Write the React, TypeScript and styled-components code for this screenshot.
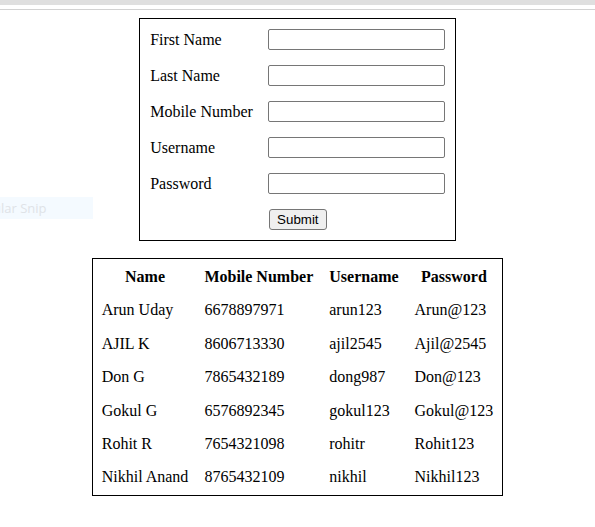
import React from "react";
import styled, { createGlobalStyle } from "styled-components";

const GlobalStyle = createGlobalStyle`
  html, body {
    margin: 0;
    padding: 0;
    background: #ffffff;
  }
  body {
    font-family: "Liberation Serif", "Times New Roman", serif;
    font-size: 16px;
    color: #000;
  }
`;

const Page = styled.div`
  position: relative;
  width: 595px;
  min-height: 527px;
  background: #fff;
`;

const TopBand = styled.div`
  height: 5px;
  background: #dfdfdf;
`;

const TopRule = styled.div`
  margin-top: 4px;
  height: 1px;
  background: #d2d2d2;
`;

const Content = styled.main`
  display: flex;
  flex-direction: column;
  align-items: center;
  padding-top: 8px;
  gap: 17px;
`;

const FormBox = styled.form`
  border: 1px solid #000;
  padding: 10px;
  display: grid;
  grid-template-columns: auto 177px;
  column-gap: 15px;
  row-gap: 15px;
  align-items: center;
`;

const Label = styled.label`
  line-height: 18px;
  white-space: nowrap;
`;

const TextInput = styled.input`
  box-sizing: border-box;
  width: 177px;
  height: 21px;
  margin: 0;
  border: 1px solid #767676;
  border-radius: 2px;
  background: #fff;
  font-family: "Liberation Sans", Arial, sans-serif;
  font-size: 13.33px;
  padding: 1px 2px;
`;

const SubmitButton = styled.button`
  grid-column: 2;
  justify-self: start;
  margin-left: 1px;
  box-sizing: border-box;
  width: 58px;
  height: 21px;
  padding: 0;
  border: 1px solid #767676;
  border-radius: 3px;
  background: #efefef;
  color: #000;
  font-family: "Liberation Sans", Arial, sans-serif;
  font-size: 13.33px;
`;

const DataTable = styled.table`
  border: 1px solid #000;
  border-collapse: separate;
  border-spacing: 2px;
`;

const HeadCell = styled.th`
  padding: 7px 7px 6.4px;
  line-height: 18px;
  font-weight: bold;
  text-align: center;
  white-space: nowrap;
`;

const Cell = styled.td`
  padding: 7px 7px 6.4px;
  line-height: 18px;
  text-align: left;
  white-space: nowrap;
`;

const SnipOverlay = styled.div`
  position: absolute;
  left: 0;
  top: 197px;
  width: 93px;
  height: 22px;
  background: #f4faff;
  color: #dfe3e7;
  font-family: "Open Sans", "Noto Sans", sans-serif;
  font-size: 13px;
  line-height: 22px;
  overflow: hidden;
  white-space: nowrap;
`;

const SnipText = styled.span`
  display: inline-block;
  margin-left: -7px;
`;

const fields = ["First Name", "Last Name", "Mobile Number", "Username", "Password"];

const rows = [
  ["Arun Uday", "6678897971", "arun123", "Arun@123"],
  ["AJIL K", "8606713330", "ajil2545", "Ajil@2545"],
  ["Don G", "7865432189", "dong987", "Don@123"],
  ["Gokul G", "6576892345", "gokul123", "Gokul@123"],
  ["Rohit R", "7654321098", "rohitr", "Rohit123"],
  ["Nikhil Anand", "8765432109", "nikhil", "Nikhil123"],
];

export default function App() {
  return (
    <Page>
      <GlobalStyle />
      <TopBand />
      <TopRule />
      <Content>
        <FormBox onSubmit={(e) => e.preventDefault()}>
          {fields.map((f) => (
            <React.Fragment key={f}>
              <Label>{f}</Label>
              <TextInput type={f === "Password" ? "password" : "text"} />
            </React.Fragment>
          ))}
          <SubmitButton type="submit">Submit</SubmitButton>
        </FormBox>
        <DataTable>
          <thead>
            <tr>
              <HeadCell>Name</HeadCell>
              <HeadCell>Mobile Number</HeadCell>
              <HeadCell>Username</HeadCell>
              <HeadCell>Password</HeadCell>
            </tr>
          </thead>
          <tbody>
            {rows.map((r) => (
              <tr key={r[0]}>
                {r.map((c, i) => (
                  <Cell key={i}>{c}</Cell>
                ))}
              </tr>
            ))}
          </tbody>
        </DataTable>
      </Content>
      <SnipOverlay>
        <SnipText>ular Snip</SnipText>
      </SnipOverlay>
    </Page>
  );
}
